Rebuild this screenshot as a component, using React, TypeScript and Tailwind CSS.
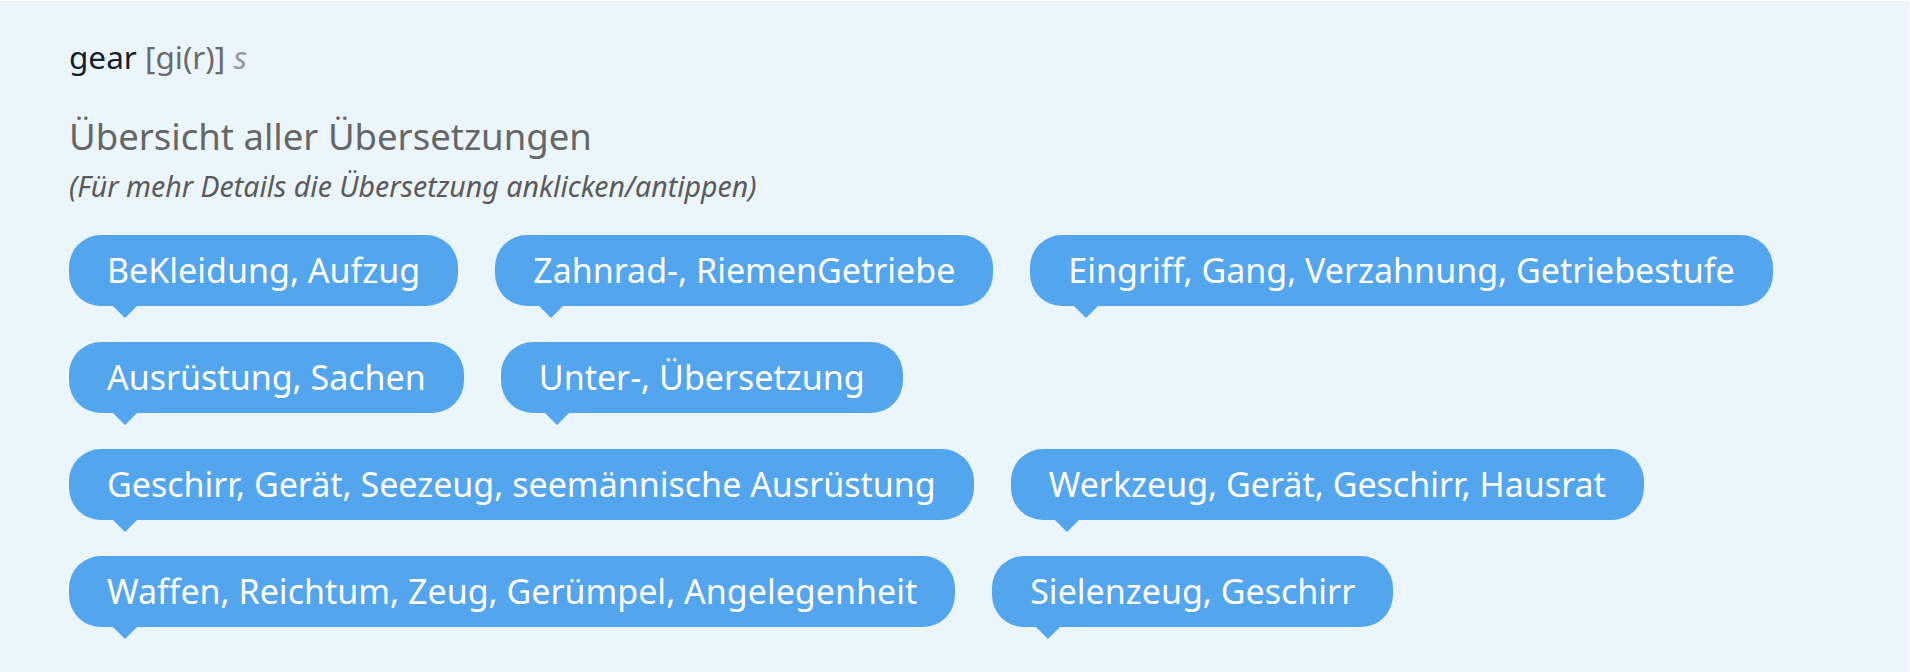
import React from "react";

const items = [
  "BeKleidung, Aufzug",
  "Zahnrad-, RiemenGetriebe",
  "Eingriff, Gang, Verzahnung, Getriebestufe",
  "Ausrüstung, Sachen",
  "Unter-, Übersetzung",
  "Geschirr, Gerät, Seezeug, seemännische Ausrüstung",
  "Werkzeug, Gerät, Geschirr, Hausrat",
  "Waffen, Reichtum, Zeug, Gerümpel, Angelegenheit",
  "Sielenzeug, Geschirr",
];

function Bubble({ label }: { label: string }) {
  return (
    <div className="relative">
      <div className="flex h-[71px] items-center rounded-[32px] bg-[#53a5ee] px-[38px] text-[34px] leading-[1.362] text-white">
        {label}
      </div>
      <svg
        className="absolute left-[43px] top-[70px]"
        width="26"
        height="13"
        viewBox="0 0 26 13"
      >
        <polygon points="0,0 26,0 13,13" fill="#53a5ee" />
      </svg>
    </div>
  );
}

export default function App() {
  return (
    <div
      className="min-h-[672px] w-full border-t border-r border-white bg-[#ebf5fc] pl-[69px] pr-[105px] pt-[36px]"
      style={{ fontFamily: '"Noto Sans", "Open Sans", sans-serif' }}
    >
      <div className="text-[31.5px] leading-[40px]">
        <span className="text-[#13202d]">gear</span>{" "}
        <span className="text-[#6b6b6b]">[gi(r)]</span>{" "}
        <span className="italic text-[#9a9a9a]">s</span>
      </div>
      <h2 className="mt-[35px] text-[36.5px] leading-[48px] text-[#666666]">
        Übersicht aller Übersetzungen
      </h2>
      <p className="mt-[10px] text-[28.5px] italic leading-[32px] text-[#5a5a5a]">
        (Für mehr Details die Übersetzung anklicken/antippen)
      </p>
      <div className="mt-[33px] flex flex-wrap gap-x-[37px] gap-y-[36px]">
        {items.map((t) => (
          <Bubble key={t} label={t} />
        ))}
      </div>
    </div>
  );
}
